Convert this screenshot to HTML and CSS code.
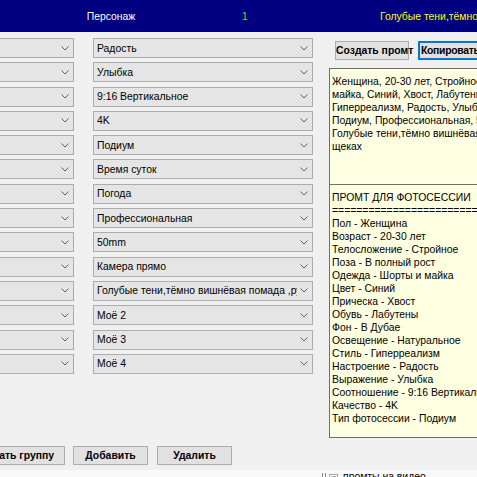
FILE: index.html
```html
<!DOCTYPE html>
<html lang="ru">
<head>
<meta charset="utf-8">
<title>Персонаж</title>
<link rel="stylesheet" href="styles.css">
</head>
<body>
<header class="topbar">
  <span class="topbar-title">Персонаж</span>
  <span class="topbar-num">1</span>
  <span class="topbar-look">Голубые тени,тёмно вишнёвая помада ,румяна на щеках</span>
</header>

<main class="workspace">
  <section class="fields">
    <div class="combo combo-side"><span class="combo-text">Настроение</span><svg class="chev" viewBox="0 0 8 5"><polyline points="0.5,0.5 4,4 7.5,0.5"/></svg></div>
    <div class="combo"><span class="combo-text">Радость</span><svg class="chev" viewBox="0 0 8 5"><polyline points="0.5,0.5 4,4 7.5,0.5"/></svg></div>

    <div class="combo combo-side"><span class="combo-text">Выражение</span><svg class="chev" viewBox="0 0 8 5"><polyline points="0.5,0.5 4,4 7.5,0.5"/></svg></div>
    <div class="combo"><span class="combo-text">Улыбка</span><svg class="chev" viewBox="0 0 8 5"><polyline points="0.5,0.5 4,4 7.5,0.5"/></svg></div>

    <div class="combo combo-side"><span class="combo-text">Соотношение</span><svg class="chev" viewBox="0 0 8 5"><polyline points="0.5,0.5 4,4 7.5,0.5"/></svg></div>
    <div class="combo"><span class="combo-text">9:16 Вертикальное</span><svg class="chev" viewBox="0 0 8 5"><polyline points="0.5,0.5 4,4 7.5,0.5"/></svg></div>

    <div class="combo combo-side"><span class="combo-text">Качество</span><svg class="chev" viewBox="0 0 8 5"><polyline points="0.5,0.5 4,4 7.5,0.5"/></svg></div>
    <div class="combo"><span class="combo-text">4K</span><svg class="chev" viewBox="0 0 8 5"><polyline points="0.5,0.5 4,4 7.5,0.5"/></svg></div>

    <div class="combo combo-side"><span class="combo-text">Тип</span><svg class="chev" viewBox="0 0 8 5"><polyline points="0.5,0.5 4,4 7.5,0.5"/></svg></div>
    <div class="combo"><span class="combo-text">Подиум</span><svg class="chev" viewBox="0 0 8 5"><polyline points="0.5,0.5 4,4 7.5,0.5"/></svg></div>

    <div class="combo combo-side"><span class="combo-text">Время</span><svg class="chev" viewBox="0 0 8 5"><polyline points="0.5,0.5 4,4 7.5,0.5"/></svg></div>
    <div class="combo"><span class="combo-text">Время суток</span><svg class="chev" viewBox="0 0 8 5"><polyline points="0.5,0.5 4,4 7.5,0.5"/></svg></div>

    <div class="combo combo-side"><span class="combo-text">Погода</span><svg class="chev" viewBox="0 0 8 5"><polyline points="0.5,0.5 4,4 7.5,0.5"/></svg></div>
    <div class="combo"><span class="combo-text">Погода</span><svg class="chev" viewBox="0 0 8 5"><polyline points="0.5,0.5 4,4 7.5,0.5"/></svg></div>

    <div class="combo combo-side"><span class="combo-text">Камера</span><svg class="chev" viewBox="0 0 8 5"><polyline points="0.5,0.5 4,4 7.5,0.5"/></svg></div>
    <div class="combo"><span class="combo-text">Профессиональная</span><svg class="chev" viewBox="0 0 8 5"><polyline points="0.5,0.5 4,4 7.5,0.5"/></svg></div>

    <div class="combo combo-side"><span class="combo-text">Объектив</span><svg class="chev" viewBox="0 0 8 5"><polyline points="0.5,0.5 4,4 7.5,0.5"/></svg></div>
    <div class="combo"><span class="combo-text">50mm</span><svg class="chev" viewBox="0 0 8 5"><polyline points="0.5,0.5 4,4 7.5,0.5"/></svg></div>

    <div class="combo combo-side"><span class="combo-text">Ракурс</span><svg class="chev" viewBox="0 0 8 5"><polyline points="0.5,0.5 4,4 7.5,0.5"/></svg></div>
    <div class="combo"><span class="combo-text">Камера прямо</span><svg class="chev" viewBox="0 0 8 5"><polyline points="0.5,0.5 4,4 7.5,0.5"/></svg></div>

    <div class="combo combo-side"><span class="combo-text">Моё 1</span><svg class="chev" viewBox="0 0 8 5"><polyline points="0.5,0.5 4,4 7.5,0.5"/></svg></div>
    <div class="combo"><span class="combo-text">Голубые тени,тёмно вишнёвая помада ,румяна на щеках</span><svg class="chev" viewBox="0 0 8 5"><polyline points="0.5,0.5 4,4 7.5,0.5"/></svg></div>

    <div class="combo combo-side"><span class="combo-text">Моё 2</span><svg class="chev" viewBox="0 0 8 5"><polyline points="0.5,0.5 4,4 7.5,0.5"/></svg></div>
    <div class="combo"><span class="combo-text">Моё 2</span><svg class="chev" viewBox="0 0 8 5"><polyline points="0.5,0.5 4,4 7.5,0.5"/></svg></div>

    <div class="combo combo-side"><span class="combo-text">Моё 3</span><svg class="chev" viewBox="0 0 8 5"><polyline points="0.5,0.5 4,4 7.5,0.5"/></svg></div>
    <div class="combo"><span class="combo-text">Моё 3</span><svg class="chev" viewBox="0 0 8 5"><polyline points="0.5,0.5 4,4 7.5,0.5"/></svg></div>

    <div class="combo combo-side"><span class="combo-text">Моё 4</span><svg class="chev" viewBox="0 0 8 5"><polyline points="0.5,0.5 4,4 7.5,0.5"/></svg></div>
    <div class="combo"><span class="combo-text">Моё 4</span><svg class="chev" viewBox="0 0 8 5"><polyline points="0.5,0.5 4,4 7.5,0.5"/></svg></div>
  </section>

  <aside class="prompt-panel">
    <div class="prompt-buttons">
      <button class="btn">Создать промт</button>
      <button class="btn btn-focus">Копировать</button>
    </div>
    <div class="memo memo-short">Женщина, 20-30 лет, Стройное, В полный рост, Шорты и
майка, Синий, Хвост, Лабутены, В Дубае, Натуральное,
Гиперреализм, Радость, Улыбка, 9:16 Вертикальное, 4K,
Подиум, Профессиональная, 50mm, Камера прямо,
Голубые тени,тёмно вишнёвая помада ,румяна на
щеках</div>
    <div class="memo memo-long">ПРОМТ ДЛЯ ФОТОСЕССИИ
==============================
Пол - Женщина
Возраст - 20-30 лет
Телосложение - Стройное
Поза - В полный рост
Одежда - Шорты и майка
Цвет - Синий
Прическа - Хвост
Обувь - Лабутены
Фон - В Дубае
Освещение - Натуральное
Стиль - Гиперреализм
Настроение - Радость
Выражение - Улыбка
Соотношение - 9:16 Вертикальное
Качество - 4K
Тип фотосессии - Подиум</div>
  </aside>
</main>

<div class="actions">
  <button class="btn btn-clipped"><span>Переименовать группу</span></button>
  <button class="btn btn-wide">Добавить</button>
  <button class="btn btn-wide">Удалить</button>
</div>

<footer class="tray">
  <span class="tray-item">
    <svg class="tray-icon" viewBox="0 0 20 8">
      <path class="tray-bracket" d="M1.5 0 V8 M4.5 0 V8"/>
      <rect class="tray-doc" x="8.5" y="1.5" width="8" height="7"/>
      <path class="tray-lines" d="M10 3.5 H15 M10 5.5 H15"/>
    </svg>
    <span class="tray-label">промты на видео</span>
  </span>
</footer>
</body>
</html>
```

FILE: styles.css
```css
html, body {
  margin: 0;
  padding: 0;
}

body {
  width: 477px;
  height: 477px;
  overflow: hidden;
  background: #f0f0f0;
  font-family: "Liberation Sans", Arial, sans-serif;
  font-size: 10.4px;
  color: #000;
}

/* title strip */
.topbar {
  height: 32px;
  background: #000080;
  display: grid;
  grid-template-columns: 222px 158px 1fr;
  align-items: center;
  white-space: nowrap;
  overflow: hidden;
}

.topbar-title {
  color: #ffffff;
  text-align: center;
}

.topbar-num {
  color: #33ee33;
  padding-left: 20px;
}

.topbar-look {
  color: #ffff00;
}

/* main area: fields + prompt panel */
.workspace {
  display: flex;
  align-items: flex-start;
  height: 406px;
}

.fields {
  flex: none;
  margin-left: -20px;
  padding-top: 6px;
  display: grid;
  grid-template-columns: 94px 220px;
  grid-auto-rows: 20px;
  column-gap: 19px;
  row-gap: 4.3px;
}

.combo {
  display: flex;
  align-items: center;
  box-sizing: border-box;
  background: #e5e5e5;
  border: 1px solid #acacac;
  padding: 0 4px 0 3px;
  overflow: hidden;
}

.combo-text {
  flex: 1;
  min-width: 0;
  white-space: nowrap;
  overflow: hidden;
}

.combo-side .combo-text {
  visibility: hidden;
}

.chev {
  flex: none;
  width: 8px;
  height: 5px;
  margin-left: 3px;
  fill: none;
  stroke: #606060;
  stroke-width: 1;
}

.prompt-panel {
  flex: none;
  width: 170px;
  margin-left: 16px;
  padding-top: 9px;
  display: flex;
  flex-direction: column;
}

.prompt-buttons {
  display: flex;
  gap: 9px;
  padding-left: 6px;
  margin-bottom: 8px;
}

.btn {
  box-sizing: border-box;
  height: 19px;
  width: 74px;
  padding: 0;
  background: #e1e1e1;
  border: 1px solid #adadad;
  font-family: "Liberation Sans", Arial, sans-serif;
  font-size: 10.4px;
  font-weight: bold;
  color: #000;
  white-space: nowrap;
}

.btn-focus {
  border: 2px solid #0078d7;
  text-align: left;
  padding-left: 1px;
  letter-spacing: -0.3px;
}

.memo {
  box-sizing: border-box;
  background: #ffffe1;
  border: 1px solid #6e6e6e;
  padding: 6px 2px 0 2px;
  white-space: pre;
  line-height: 13px;
  overflow: hidden;
}

.memo-short {
  height: 116px;
  border-bottom: none;
}

.memo-long {
  height: 254px;
}

/* lower button row */
.actions {
  display: flex;
  gap: 8px;
  margin-top: 8px;
}

.btn-wide {
  width: 75px;
}

.btn-wide + .btn-wide {
  margin-left: 1px;
}

.btn-clipped {
  width: 65px;
  border-left: none;
  display: flex;
  justify-content: flex-end;
  align-items: center;
  padding-right: 10px;
  overflow: hidden;
}

/* strip along the bottom edge */
.tray {
  margin-top: 5px;
  height: 20px;
  background: #f9f9f9;
  padding-left: 321px;
}

.tray-item {
  display: flex;
  align-items: center;
  gap: 2px;
  height: 14px;
}

.tray-icon {
  width: 20px;
  height: 8px;
  fill: none;
  stroke-width: 1;
}

.tray-bracket {
  stroke: #8a8a8a;
}

.tray-doc {
  fill: #ffffff;
  stroke: #9aa6b8;
}

.tray-lines {
  stroke: #b0bccc;
}

.tray-label {
  line-height: 14px;
}
```
